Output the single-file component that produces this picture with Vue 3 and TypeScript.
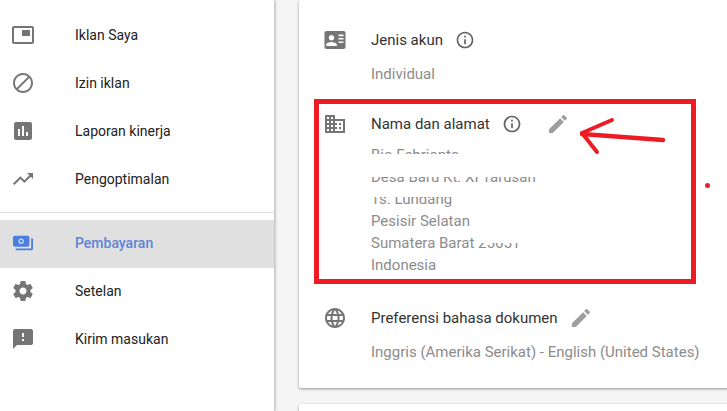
<script setup lang="ts">
interface NavItem {
  label: string
  icon: string
  active?: boolean
}

const icons = {
  pip: 'M19 7h-8v6h8V7zm2-4H3c-1.1 0-2 .9-2 2v14c0 1.1.9 1.98 2 1.98h18c1.1 0 2-.88 2-1.98V5c0-1.1-.9-2-2-2zm0 16.01H3V4.98h18v14.03z',
  block: 'M12 2C6.48 2 2 6.48 2 12s4.48 10 10 10 10-4.48 10-10S17.52 2 12 2zM4 12c0-4.42 3.58-8 8-8 1.85 0 3.55.63 4.9 1.69L5.69 16.9C4.63 15.55 4 13.85 4 12zm8 8c-1.85 0-3.55-.63-4.9-1.69L18.31 7.1C19.37 8.45 20 10.15 20 12c0 4.42-3.58 8-8 8z',
  chart: 'M19 3H5c-1.1 0-2 .9-2 2v14c0 1.1.9 2 2 2h14c1.1 0 2-.9 2-2V5c0-1.1-.9-2-2-2zM9 17H7v-7h2v7zm4 0h-2V7h2v10zm4 0h-2v-4h2v4z',
  trend: 'M16 6l2.29 2.29-4.88 4.88-4-4L2 16.59 3.41 18l6-6 4 4 6.3-6.29L22 12V6z',
  money: 'M19 14V6c0-1.1-.9-2-2-2H3c-1.1 0-2 .9-2 2v8c0 1.1.9 2 2 2h14c1.1 0 2-.9 2-2zm-9-1c-1.66 0-3-1.34-3-3s1.34-3 3-3 3 1.34 3 3-1.34 3-3 3zm0-4.6a1.6 1.6 0 1 0 0 3.2 1.6 1.6 0 0 0 0-3.2zM23 7v11c0 1.1-.9 2-2 2H4v-2h17V7h2z',
  gear: 'M19.43 12.98c.04-.32.07-.64.07-.98s-.03-.66-.07-.98l2.11-1.65c.19-.15.24-.42.12-.64l-2-3.46c-.12-.22-.39-.3-.61-.22l-2.49 1c-.52-.4-1.08-.73-1.69-.98l-.38-2.65C14.46 2.18 14.25 2 14 2h-4c-.25 0-.46.18-.49.42l-.38 2.65c-.61.25-1.17.59-1.69.98l-2.49-1c-.23-.09-.49 0-.61.22l-2 3.46c-.13.22-.07.49.12.64l2.11 1.65c-.04.32-.07.65-.07.98s.03.66.07.98l-2.11 1.65c-.19.15-.24.42-.12.64l2 3.46c.12.22.39.3.61.22l2.49-1c.52.4 1.08.73 1.69.98l.38 2.65c.03.24.24.42.49.42h4c.25 0 .46-.18.49-.42l.38-2.65c.61-.25 1.17-.59 1.69-.98l2.49 1c.23.09.49 0 .61-.22l2-3.46c.12-.22.07-.49-.12-.64l-2.11-1.65zM12 15.5c-1.93 0-3.5-1.57-3.5-3.5s1.57-3.5 3.5-3.5 3.5 1.57 3.5 3.5-1.57 3.5-3.5 3.5z',
  feedback: 'M20 2H4c-1.1 0-1.99.9-1.99 2L2 22l4-4h14c1.1 0 2-.9 2-2V4c0-1.1-.9-2-2-2zm-7 12h-2v-2h2v2zm0-4h-2V6h2v4z',
  card: 'M20.5 3h-17C2.4 3 1.5 3.9 1.5 5v14c0 1.1.9 2 2 2h17c1.1 0 2-.9 2-2V5c0-1.1-.9-2-2-2zM8.5 7c1.5 0 2.7 1.2 2.7 2.7s-1.2 2.7-2.7 2.7-2.7-1.2-2.7-2.7S7 7 8.5 7zm5.4 11H3.1v-1.1c0-1.8 3.6-2.8 5.4-2.8s5.4 1 5.4 2.8V18zm6.6-3h-5v-1.6h5V15zm0-3.4h-5V10h5v1.6zm0-3.4h-5V6.6h5v1.6z',
  domain: 'M12 7V3H2v18h20V7H12zM6 19H4v-2h2v2zm0-4H4v-2h2v2zm0-4H4V9h2v2zm0-4H4V5h2v2zm4 12H8v-2h2v2zm0-4H8v-2h2v2zm0-4H8V9h2v2zm0-4H8V5h2v2zm10 12h-8v-2h2v-2h-2v-2h2v-2h-2V9h8v10zm-2-8h-2v2h2v-2zm0 4h-2v2h2v-2z',
  globe: 'M11.99 2C6.47 2 2 6.48 2 12s4.47 10 9.99 10C17.52 22 22 17.52 22 12S17.52 2 11.99 2zm6.93 6h-2.95c-.32-1.25-.78-2.45-1.38-3.56 1.84.63 3.37 1.91 4.33 3.56zM12 4.04c.83 1.2 1.48 2.53 1.91 3.96h-3.82c.43-1.43 1.08-2.76 1.91-3.96zM4.26 14C4.1 13.36 4 12.69 4 12s.1-1.36.26-2h3.38c-.08.66-.14 1.32-.14 2 0 .68.06 1.34.14 2H4.26zm.82 2h2.95c.32 1.25.78 2.45 1.38 3.56-1.84-.63-3.37-1.9-4.33-3.56zm2.95-8H5.08c.96-1.66 2.49-2.93 4.33-3.56C8.81 5.55 8.35 6.75 8.03 8zM12 19.96c-.83-1.2-1.48-2.53-1.91-3.96h3.82c-.43 1.43-1.08 2.76-1.91 3.96zM14.34 14H9.66c-.09-.66-.16-1.32-.16-2 0-.68.07-1.35.16-2h4.68c.09.65.16 1.32.16 2 0 .68-.07 1.34-.16 2zm.25 5.56c.6-1.11 1.06-2.31 1.38-3.56h2.95c-.96 1.65-2.49 2.93-4.33 3.56zM16.36 14c.08-.66.14-1.32.14-2 0-.68-.06-1.34-.14-2h3.38c.16.64.26 1.31.26 2s-.1 1.36-.26 2h-3.38z',
  info: 'M11 7h2v2h-2zm0 4h2v6h-2zm1-9C6.48 2 2 6.48 2 12s4.48 10 10 10 10-4.48 10-10S17.52 2 12 2zm0 18c-4.41 0-8-3.59-8-8s3.59-8 8-8 8 3.59 8 8-3.59 8-8 8z',
  pencil: 'M3 17.25V21h3.75L17.81 9.94l-3.75-3.75L3 17.25zM20.71 7.04c.39-.39.39-1.02 0-1.41l-2.34-2.34c-.39-.39-1.02-.39-1.41 0l-1.83 1.83 3.75 3.75 1.83-1.83z',
}

const topNav: NavItem[] = [
  { label: 'Iklan Saya', icon: icons.pip },
  { label: 'Izin iklan', icon: icons.block },
  { label: 'Laporan kinerja', icon: icons.chart },
  { label: 'Pengoptimalan', icon: icons.trend },
]

const bottomNav: NavItem[] = [
  { label: 'Pembayaran', icon: icons.money, active: true },
  { label: 'Setelan', icon: icons.gear },
  { label: 'Kirim masukan', icon: icons.feedback },
]

const addressLines = [
  'Bio Febrianto',
  'Desa Baru Kt. XI Tarusan',
  'Ts. Lundang',
  'Pesisir Selatan',
  'Sumatera Barat 25651',
  'Indonesia',
]
</script>

<template>
  <div class="page">
    <aside class="sidebar">
      <nav class="nav-group">
        <a v-for="item in topNav" :key="item.label" class="nav-item">
          <svg class="icon" viewBox="0 0 24 24"><path :d="item.icon" /></svg>
          <span>{{ item.label }}</span>
        </a>
      </nav>
      <hr class="divider" />
      <nav class="nav-group nav-group-low">
        <a
          v-for="item in bottomNav"
          :key="item.label"
          class="nav-item"
          :class="{ active: item.active }"
        >
          <svg class="icon" viewBox="0 0 24 24"><path :d="item.icon" /></svg>
          <span>{{ item.label }}</span>
        </a>
      </nav>
    </aside>

    <main class="content">
      <section class="card">
        <div class="row row-type">
          <svg class="icon" viewBox="0 0 24 24"><path :d="icons.card" /></svg>
          <div class="row-body">
            <div class="row-title">
              <span>Jenis akun</span>
              <svg class="info" viewBox="0 0 24 24"><path :d="icons.info" /></svg>
            </div>
            <div class="row-value">Individual</div>
          </div>
        </div>

        <div class="row row-address">
          <svg class="icon" viewBox="0 0 24 24"><path :d="icons.domain" /></svg>
          <div class="row-body">
            <div class="row-title">
              <span>Nama dan alamat</span>
              <svg class="info" viewBox="0 0 24 24"><path :d="icons.info" /></svg>
              <svg class="pencil pencil-far" viewBox="0 0 24 24"><path :d="icons.pencil" /></svg>
            </div>
            <div class="address">
              <div v-for="line in addressLines" :key="line">{{ line }}</div>
              <!-- white-out over the personal details -->
              <i class="mask mask-name"></i>
              <i class="mask mask-street"></i>
              <i class="mask mask-zip"></i>
            </div>
          </div>
        </div>

        <div class="row row-lang">
          <svg class="icon" viewBox="0 0 24 24"><path :d="icons.globe" /></svg>
          <div class="row-body">
            <div class="row-title">
              <span>Preferensi bahasa dokumen</span>
              <svg class="pencil" viewBox="0 0 24 24"><path :d="icons.pencil" /></svg>
            </div>
            <div class="row-value">Inggris (Amerika Serikat) - English (United States)</div>
          </div>
        </div>
      </section>
      <section class="card card-next"></section>
    </main>

    <!-- hand-drawn annotation over the screenshot -->
    <div class="note-box"></div>
    <svg class="note-arrow" viewBox="0 0 100 50">
      <path d="M3 20 L84 26" stroke-width="4.5" />
      <path d="M3 19 L33 6" stroke-width="4" />
      <path d="M3 19 L18 38" stroke-width="4" />
    </svg>
    <i class="note-dot"></i>
  </div>
</template>

<style scoped>
.page {
  position: relative;
  display: flex;
  width: 727px;
  height: 411px;
  overflow: hidden;
  background: #f5f5f5;
  font-family: Roboto, "Liberation Sans", sans-serif;
  font-size: 15px;
}

.sidebar {
  flex: none;
  width: 274px;
  padding-top: 11px;
  box-sizing: border-box;
  background: #fff;
  box-shadow: 1px 0 3px rgba(0, 0, 0, 0.3);
}

.nav-item {
  display: flex;
  align-items: center;
  gap: 40px;
  height: 48px;
  box-sizing: border-box;
  padding-left: 11px;
  font-size: 14px;
  color: #212121;
}

.nav-group-low .nav-item {
  padding-bottom: 2px;
}

.nav-item .icon {
  fill: #757575;
}

.nav-item.active {
  background: #e0e0e0;
  color: #5b84dc;
  font-weight: 500;
}

.nav-item.active .icon {
  fill: #4a7fe0;
  transform: scale(0.91);
}

.divider {
  height: 1px;
  margin: 9px 0 7px;
  border: 0;
  background: #e0e0e0;
}

.icon {
  flex: none;
  width: 24px;
  height: 24px;
  fill: #757575;
}

.content {
  flex: 1;
  min-width: 0;
  padding-left: 25px;
}

.card {
  width: 460px;
  height: 388px;
  box-sizing: border-box;
  padding: 28px 0 0 24px;
  background: #fff;
  border-radius: 2px;
  box-shadow: 0 1px 3px rgba(0, 0, 0, 0.4);
}

.card-next {
  height: 40px;
  margin-top: 16px;
  padding: 0;
}

.row {
  display: flex;
  gap: 24px;
}

.row-address {
  margin-top: 27px;
}

.row-lang {
  margin-top: 30px;
}

.row-body {
  min-width: 0;
}

.row-title {
  display: flex;
  align-items: center;
  height: 24px;
  color: #333;
}

.row-value {
  margin-top: 11px;
  line-height: 22px;
  color: #8c8c8c;
  white-space: nowrap;
}

.info {
  width: 20px;
  height: 20px;
  margin-left: 12px;
  fill: #616161;
}

.pencil {
  width: 24px;
  height: 24px;
  margin-left: 11px;
  fill: #9e9e9e;
}

.pencil-far {
  margin-left: 24px;
}

.address {
  position: relative;
  margin-top: 8px;
  line-height: 22px;
  color: #8c8c8c;
}

.mask {
  position: absolute;
  background: #fff;
}

.mask-name {
  top: 10px;
  left: 0;
  width: 180px;
  height: 23px;
}

.mask-street {
  top: 46px;
  left: 0;
  width: 180px;
  height: 7px;
}

.mask-zip {
  top: 90px;
  left: 107px;
  width: 60px;
  height: 9px;
}

.note-box {
  position: absolute;
  left: 314px;
  top: 99px;
  width: 382px;
  height: 185px;
  box-sizing: border-box;
  border: 5px solid #ed1c24;
}

.note-arrow {
  position: absolute;
  left: 579px;
  top: 114px;
  width: 100px;
  height: 50px;
  fill: none;
  stroke: #ed1c24;
  stroke-linecap: round;
}

.note-dot {
  position: absolute;
  left: 705px;
  top: 183px;
  width: 5px;
  height: 5px;
  border-radius: 50%;
  background: #ed1c24;
}
</style>
